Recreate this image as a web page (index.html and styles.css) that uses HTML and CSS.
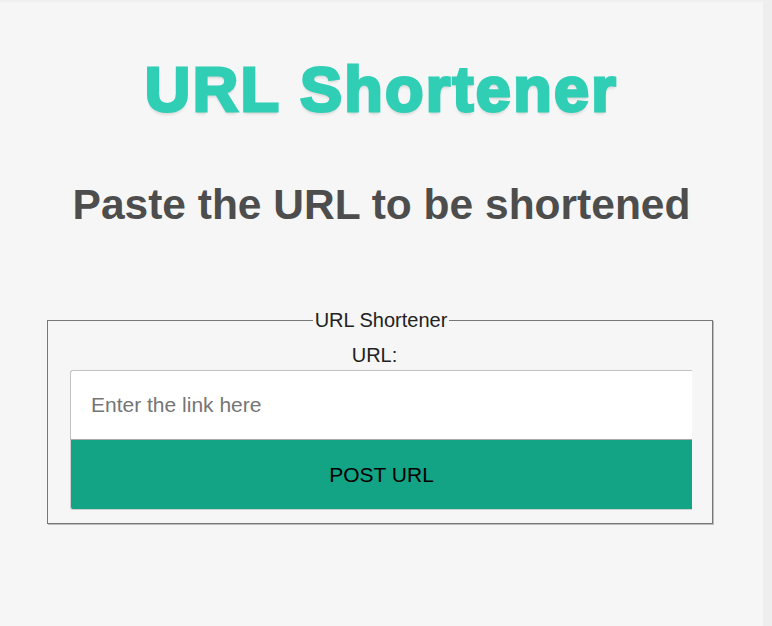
FILE: index.html
```html
<!DOCTYPE html>
<html lang="en">
<head>
<meta charset="utf-8">
<title>URL Shortener</title>
<link rel="stylesheet" href="styles.css">
</head>
<body>
<div class="page">
  <main class="main">
    <h1 class="title">URL Shortener</h1>
    <h2 class="subtitle">Paste the URL to be shortened</h2>
    <form class="form">
      <fieldset class="box">
        <legend class="box-legend">URL Shortener</legend>
        <label class="label" for="url">URL:</label>
        <div class="controls">
          <input class="input" id="url" type="text" placeholder="Enter the link here">
          <button class="button" type="button">POST URL</button>
        </div>
      </fieldset>
    </form>
  </main>
  <div class="rail"></div>
</div>
</body>
</html>
```
FILE: styles.css
```css
html, body {
  margin: 0;
  padding: 0;
}
body {
  background: #f6f6f6;
  font-family: "Liberation Sans", Arial, sans-serif;
}
.page {
  display: flex;
  min-height: 626px;
}
.main {
  flex: 1;
  border-top: 2px solid #f0f0f0;
}
.rail {
  width: 9px;
  background: #eeeeee;
}
.title {
  margin: 49px 0 0;
  font-size: 63px;
  line-height: 77px;
  font-weight: bold;
  letter-spacing: 2.3px;
  text-align: center;
  color: #30cfb5;
  -webkit-text-stroke: 3px #30cfb5;
  text-shadow: 0 3px 3px rgba(0, 0, 0, 0.14);
}
.subtitle {
  margin: 53px 0 0;
  font-size: 42.5px;
  line-height: 48px;
  font-weight: bold;
  text-align: center;
  color: #4d4d4d;
}
.form {
  margin: 80px 0 0 47px;
}
.box {
  width: 622px;
  margin: 0;
  padding: 0 20px 13px 22px;
  border: 1px solid #777;
  box-shadow: 1px 1px 0 #bdbdbd;
}
.box-legend {
  margin: 0 auto;
  padding: 0 2px;
  font-size: 20px;
  line-height: 23px;
  color: #222;
}
.label {
  display: block;
  padding: 12px 13px 0 0;
  font-size: 20px;
  line-height: 23px;
  text-align: center;
  color: #222;
}
.controls {
  display: flex;
  flex-direction: column;
  margin-top: 3px;
}
.input {
  box-sizing: border-box;
  height: 70px;
  margin: 0;
  padding: 0 20px;
  border: 1px solid #c2c2c2;
  border-right: none;
  border-bottom-color: #a9a9a9;
  border-radius: 3px 0 0 0;
  background: #fff;
  font-family: "Liberation Sans", Arial, sans-serif;
  font-size: 21px;
  color: #333;
  outline: none;
}
.input::placeholder {
  color: #757575;
}
.button {
  box-sizing: border-box;
  height: 70px;
  margin: 0;
  padding: 0;
  border: 1px solid #cfcfcf;
  border-top: none;
  border-right: none;
  border-radius: 0 0 0 3px;
  background: #13a385;
  font-family: "Liberation Sans", Arial, sans-serif;
  font-size: 21px;
  color: #000;
  text-align: center;
}
```
